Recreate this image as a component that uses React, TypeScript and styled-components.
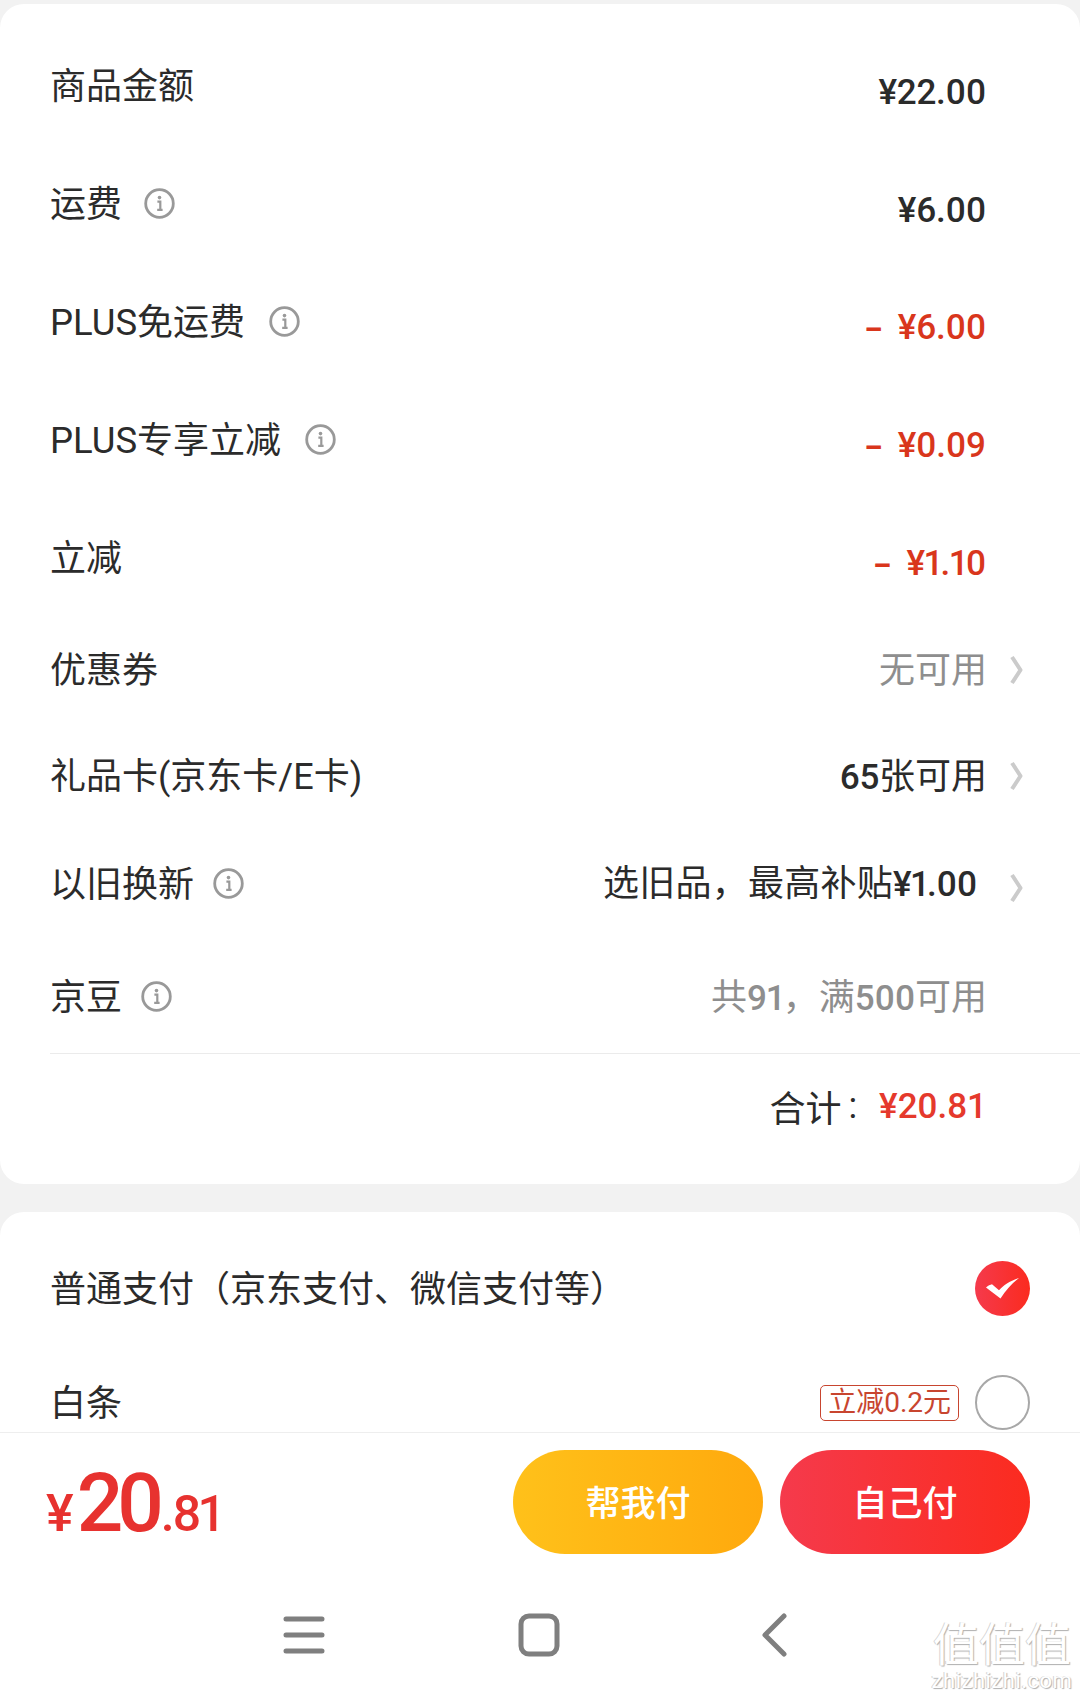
import styled, { createGlobalStyle } from 'styled-components';

const GlobalStyle = createGlobalStyle`
  html, body {
    margin: 0;
    padding: 0;
    background: #f2f2f2;
    font-family: Roboto, "Noto Sans CJK SC", sans-serif;
  }
  * { box-sizing: border-box; }
`;

const Page = styled.div`
  position: relative;
  display: flex;
  flex-direction: column;
  width: 1080px;
  height: 1701px;
  overflow: hidden;
  background: #f2f2f2;
  color: #2b2b2b;
`;
const Scroll = styled.div`
  flex: 1;
  min-height: 0;
  overflow: hidden;
  padding-top: 4px;
`;
const Card = styled.section<{ $top: number; $bottom?: number }>`
  background: #fff;
  border-radius: 24px;
  padding: ${(p) => p.$top}px 0 ${(p) => p.$bottom ?? 0}px;
  & + & {
    margin-top: 28px;
  }
`;
const Row = styled.div<{ $h: number; $shift?: number }>`
  display: flex;
  align-items: center;
  height: ${(p) => p.$h}px;
  padding: ${(p) => p.$shift ?? 0}px 57px 0 50px;
`;
const Label = styled.span`
  font-size: 36px;
  line-height: 44px;
  padding-top: 2px;
  white-space: nowrap;
`;
const Latin = styled.span`
  font-size: 36.5px;
`;
const InfoIcon = styled.svg<{ $gap: number }>`
  width: 31px;
  height: 31px;
  margin-left: ${(p) => p.$gap}px;
  margin-bottom: 2px;
  flex: none;
`;
const Value = styled.div<{ $tone?: 'dark' | 'red' | 'gray'; $drop?: number; $cjkEnd?: boolean }>`
  margin-left: auto;
  margin-right: ${(p) => (p.$cjkEnd ? -1 : 0)}px;
  font-size: 36px;
  line-height: 44px;
  white-space: nowrap;
  margin-top: ${(p) => p.$drop ?? 0}px;
  color: ${(p) =>
    p.$tone === 'red' ? '#d9361c' : p.$tone === 'gray' ? '#8e8e8e' : '#2b2b2b'};
`;
const Loose = styled.span`
  letter-spacing: 0.25px;
`;
const Num = styled.span`
  font-size: 35px;
  font-weight: 500;
  letter-spacing: -0.3px;
  font-feature-settings: "pnum";
`;
const Dash = styled.span`
  font-size: 28px;
  font-weight: 900;
  margin-right: 16px;
`;
const Slot = styled.div<{ $wide?: boolean }>`
  width: ${(p) => (p.$wide ? 46 : 37)}px;
  flex: none;
  display: flex;
  justify-content: flex-end;
`;
const Chevron = styled.svg<{ $drop?: boolean }>`
  width: 13px;
  height: 30px;
  margin-top: ${(p) => (p.$drop ? 7 : 0)}px;
`;
const Divider = styled.div`
  height: 1px;
  margin-left: 50px;
  background: #ebebeb;
`;
const TotalRow = styled.div`
  display: flex;
  justify-content: flex-end;
  align-items: center;
  height: 104px;
  padding-right: 93px;
  font-size: 36px;
`;
const Colon = styled.span`
  margin-left: 7px;
`;
const TotalAmount = styled.span`
  font-size: 35px;
  font-weight: 500;
  color: #e5392c;
  margin-left: 22px;
`;
const PayRow = styled.div`
  display: flex;
  align-items: center;
  justify-content: space-between;
  height: 114px;
  padding: 0 50px;
`;
const PayRight = styled.div`
  display: flex;
  align-items: center;
  gap: 16px;
`;
const Tag = styled.span`
  display: block;
  padding: 0 7px;
  height: 36px;
  line-height: 33px;
  border: 1px solid #c8452f;
  border-radius: 5px;
  font-size: 28px;
  color: #c8452f;
`;
const CheckedDot = styled.svg`
  width: 55px;
  height: 55px;
  display: block;
  margin-top: -2px;
`;
const EmptyDot = styled.div`
  width: 55px;
  height: 55px;
  margin-top: -2px;
  border-radius: 50%;
  border: 2px solid #a8a8a8;
  background: #fff;
`;
const Footer = styled.footer`
  flex: none;
  background: #fff;
  border-top: 1px solid #eeeeee;
`;
const Bar = styled.div`
  display: flex;
  align-items: center;
  justify-content: space-between;
  height: 139px;
  padding: 17px 50px 0 46px;
`;
const Price = styled.div`
  display: flex;
  align-items: baseline;
  color: #e7322f;
  font-weight: 500;
  margin-top: -16px;
`;
const PriceYen = styled.span`
  font-size: 52px;
`;
const PriceCents = styled.span`
  font-size: 50px;
  letter-spacing: -2.5px;
  font-feature-settings: "pnum";
`;
const PriceBig = styled.span`
  font-size: 82px;
  letter-spacing: -6px;
  margin-left: 3px;
  margin-right: 3px;
`;
const Buttons = styled.div`
  display: flex;
  gap: 17px;
  align-self: flex-start;
`;
const PayButton = styled.button<{ $kind: 'help' | 'self' }>`
  width: 250px;
  height: 104px;
  border: 0;
  padding: 0 0 4px;
  border-radius: 52px;
  font-family: inherit;
  font-size: 35px;
  font-weight: 500;
  color: #fff;
  background: ${(p) =>
    p.$kind === 'help'
      ? 'linear-gradient(90deg, #ffc11a, #ffa90d)'
      : 'linear-gradient(90deg, #f53a4c, #fb2b1f)'};
`;
const Nav = styled.nav`
  display: flex;
  justify-content: center;
  align-items: center;
  height: 129px;
  padding-bottom: 4px;
`;
const NavSlot = styled.div`
  width: 236px;
  display: flex;
  justify-content: center;
`;
const NavIcon = styled.svg`
  width: 44px;
  height: 44px;
  display: block;
`;
const Watermark = styled.div`
  position: absolute;
  right: 6px;
  bottom: 8px;
  width: 144px;
  text-align: center;
  color: #fff;
  text-shadow: 1px 1px 1px #b0b0b0, -1px 0 0 #d4d4d4;
`;
const WatermarkMark = styled.div`
  font-size: 46px;
  line-height: 56px;
  font-family: "Noto Sans CJK SC", sans-serif;
`;
const WatermarkSite = styled.div`
  font-size: 22px;
  line-height: 24px;
  letter-spacing: 0.5px;
`;

function Info({ gap = 22 }: { gap?: number }) {
  return (
    <InfoIcon $gap={gap} viewBox="0 0 31 31" fill="none">
      <circle cx="15.5" cy="15.5" r="13.8" stroke="#999" strokeWidth="2.8" />
      <circle cx="15.5" cy="9.6" r="1.8" fill="#999" />
      <path d="M13.4 13.6h2.9v8M13.2 21.8h5.4" stroke="#999" strokeWidth="2.2" />
    </InfoIcon>
  );
}

function Arrow({ drop }: { drop?: boolean }) {
  return (
    <Chevron $drop={drop} viewBox="0 0 13 30" fill="none">
      <path d="M2 2l8.5 13L2 28" stroke="#cbcbcb" strokeWidth="4" strokeLinejoin="round" />
    </Chevron>
  );
}

const amounts = [
  { label: <>商品金额</>, key: 'goods', amount: '¥22.00' },
  { label: <>运费</>, key: 'ship', amount: '¥6.00', gap: 22 },
  { label: <><Latin>PLUS</Latin>免运费</>, key: 'plus-ship', amount: '¥6.00', gap: 24, red: true },
  { label: <><Latin>PLUS</Latin>专享立减</>, key: 'plus-off', amount: '¥0.09', gap: 24, red: true },
  { label: <>立减</>, key: 'off', amount: '¥1.10', red: true },
];

export default function App() {
  return (
    <Page>
      <GlobalStyle />
      <Scroll>
        <Card $top={23} $bottom={0}>
          {amounts.map((a) => (
            <Row $h={118} key={a.key}>
              <Label>{a.label}</Label>
              {a.gap && <Info gap={a.gap} />}
              <Value $drop={12} $tone={a.red ? 'red' : 'dark'}>
                {a.red && <Dash>–</Dash>}
                <Num>{a.amount}</Num>
              </Value>
              <Slot />
            </Row>
          ))}
          <Row $h={106}>
            <Label>优惠券</Label>
            <Value $tone="gray" $cjkEnd $drop={2}>无可用</Value>
            <Slot><Arrow /></Slot>
          </Row>
          <Row $h={106}>
            <Label>礼品卡(京东卡/E卡)</Label>
            <Value $cjkEnd $drop={2}><Num>65</Num>张可用</Value>
            <Slot><Arrow /></Slot>
          </Row>
          <Row $h={110}>
            <Label>以旧换新</Label>
            <Info gap={19} />
            <Value><Loose>选旧品，最高补贴</Loose><Num>¥1.00</Num></Value>
            <Slot $wide><Arrow drop /></Slot>
          </Row>
          <Row $h={114} $shift={2}>
            <Label>京豆</Label>
            <Info gap={19} />
            <Value $tone="gray" $cjkEnd $drop={3}>共<Num>91</Num>，满<Num>500</Num>可用</Value>
            <Slot />
          </Row>
          <Divider />
          <TotalRow>
            合计<Colon>:</Colon><TotalAmount>¥20.81</TotalAmount>
          </TotalRow>
          <Row $h={26} />
        </Card>
        <Card $top={20}>
          <PayRow>
            <Label>普通支付（京东支付、微信支付等）</Label>
            <CheckedDot viewBox="0 0 55 55">
              <defs>
                <linearGradient id="dot" x1="0" x2="1" y1="0" y2="0">
                  <stop offset="0" stopColor="#f53a4c" />
                  <stop offset="1" stopColor="#fb2b1f" />
                </linearGradient>
              </defs>
              <circle cx="27.5" cy="27.5" r="27.5" fill="url(#dot)" />
              <path d="M11 26.5c2-1.7 4.3-2.8 6-3.2l7 6c4.6-5.2 11-9.4 20-12.3-7.5 5.8-13 12-18.5 20.5z" fill="#fff" />
            </CheckedDot>
          </PayRow>
          <PayRow>
            <Label>白条</Label>
            <PayRight>
              <Tag>立减0.2元</Tag>
              <EmptyDot />
            </PayRight>
          </PayRow>
        </Card>
      </Scroll>
      <Footer>
        <Bar>
          <Price>
            <PriceYen>¥</PriceYen>
            <PriceBig>20</PriceBig>
            <PriceCents>.81</PriceCents>
          </Price>
          <Buttons>
            <PayButton $kind="help">帮我付</PayButton>
            <PayButton $kind="self">自己付</PayButton>
          </Buttons>
        </Bar>
        <Nav>
          <NavSlot>
            <NavIcon viewBox="0 0 44 44" fill="none" stroke="#7f7f7f" strokeWidth="5" strokeLinecap="round">
              <path d="M4 6h36M4 22h36M4 38h36" />
            </NavIcon>
          </NavSlot>
          <NavSlot>
            <NavIcon viewBox="0 0 44 44" fill="none" stroke="#7f7f7f" strokeWidth="5">
              <rect x="3" y="3" width="36" height="38" rx="8" />
            </NavIcon>
          </NavSlot>
          <NavSlot>
            <NavIcon viewBox="0 0 44 44" fill="none" stroke="#7f7f7f" strokeWidth="5" strokeLinecap="round" strokeLinejoin="round">
              <path d="M30 3L11 22l19 19" />
            </NavIcon>
          </NavSlot>
        </Nav>
      </Footer>
      <Watermark>
        <WatermarkMark>值值值</WatermarkMark>
        <WatermarkSite>zhizhizhi.com</WatermarkSite>
      </Watermark>
    </Page>
  );
}
